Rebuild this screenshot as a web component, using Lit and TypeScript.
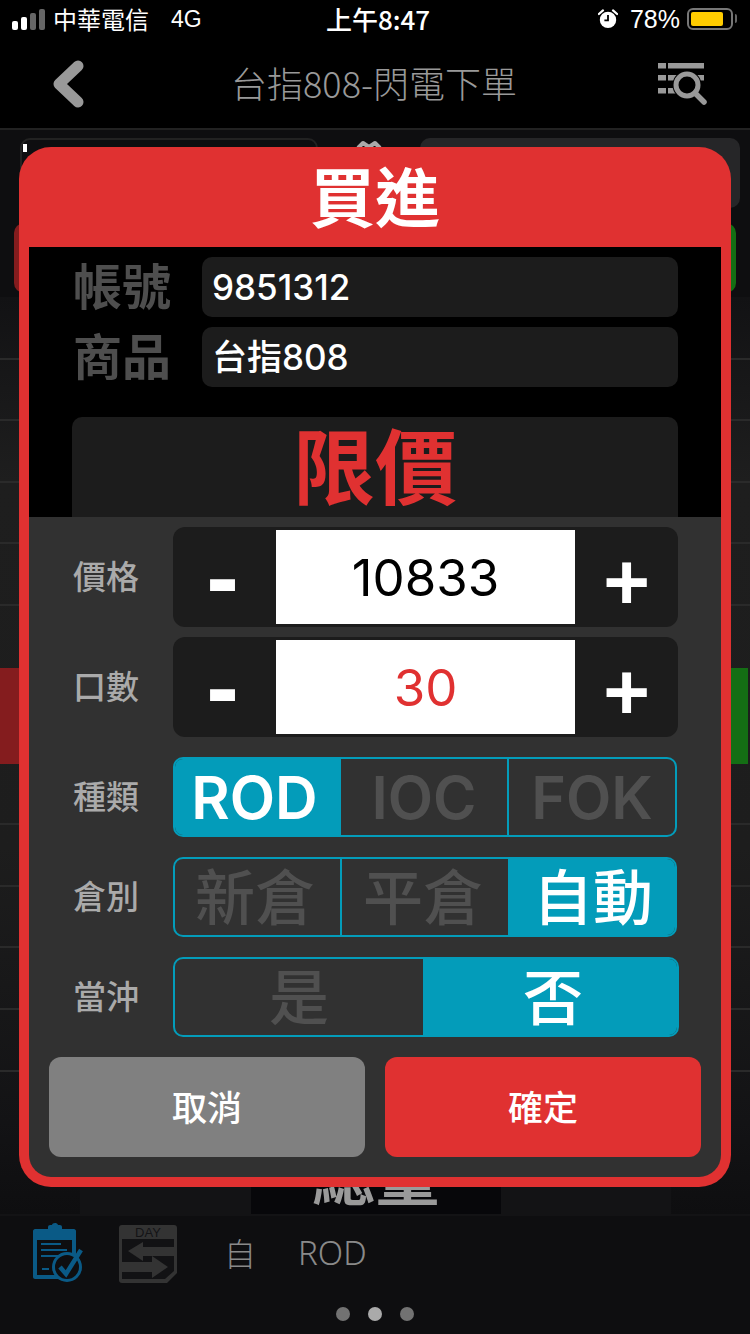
import { LitElement, html, css } from "lit";
import { customElement } from "lit/decorators.js";

const CJK = css(['"Noto Sans CJK TC", "Noto Sans CJK SC", sans-serif'] as any);

@customElement("app-root")
export class AppRoot extends LitElement {
  static styles = css`
    :host { display: block; position: relative; width: 750px; height: 1334px; overflow: hidden; background: #0e0e10; font-family: Inter, "Noto Sans CJK TC", sans-serif; color: #fff; }
    .status { height: 40px; background: #000; display: grid; grid-template-columns: 1fr auto 1fr; align-items: center; padding: 0 17px 2px 12px; box-sizing: border-box; font-size: 24px; }
    .st-left { display: flex; align-items: center; }
    .signal { display: flex; align-items: flex-end; gap: 3px; height: 21px; width: 41px; }
    .signal i { display: block; width: 6px; border-radius: 2px; background: #666; }
    .signal i.on { background: #fff; }
    .s1 { height: 9px; } .s2 { height: 13px; } .s3 { height: 17px; } .s4 { height: 21px; }
    .carrier { font-family: ${CJK}; margin-right: 22px; font-size: 24px; line-height: 1; }
    .net { font-size: 23px; font-family: "Liberation Sans", sans-serif; }
    .time { font-size: 26px; font-weight: 500; font-family: ${CJK}; line-height: 1; margin-left: 11px; }
    .st-right { display: flex; align-items: center; justify-content: flex-end; }
    .alarm { width: 20px; height: 20px; margin-right: 12px; }
    .pct { font-size: 25px; font-family: "Liberation Sans", sans-serif; margin-right: 7px; }
    .batt { width: 46px; height: 22px; box-sizing: border-box; border: 2px solid #777; border-radius: 6px; padding: 2px; position: relative; }
    .batt b { display: block; width: 32px; height: 14px; background: #ffcc00; border-radius: 2px; }
    .batt::after { content: ""; position: absolute; left: 46px; top: 4px; width: 2px; height: 9px; background: #666; border-radius: 0 2px 2px 0; }

    .nav { height: 88px; background: #000; border-bottom: 2px solid #222; display: flex; align-items: center; justify-content: space-between; padding: 0 42px 0 52px; }
    .back { width: 32px; height: 48px; display: block; }
    .title { font-family: ${CJK}; font-size: 36px; font-weight: 300; color: #999; line-height: 1; padding-bottom: 4px; margin-left: 6px; }
    .tools { width: 50px; height: 44px; display: block; margin-top: 2px; }

    .controls { display: flex; padding: 8px 10px 0 20px; height: 93px; box-sizing: border-box; }
    .ctl-l { width: 298px; height: 70px; box-sizing: border-box; border: 2px solid #222; border-radius: 10px; background: #0e0e10; padding: 4px 0 0 1px; }
    .cursor { display: block; width: 4px; height: 8px; background: #fff; }
    .ctl-m { width: 102px; display: flex; justify-content: center; padding-top: 2px; }
    .ctl-m svg { width: 26px; height: 10px; }
    .ctl-r { width: 320px; height: 70px; border-radius: 10px; background: #262628; }

    .actions { display: flex; justify-content: space-between; padding: 0 14px; height: 74px; }
    .act { width: 300px; height: 70px; border-radius: 10px; }
    .act.r { background: #841c1e; }
    .act.g { background: #146e14; }

    .rows { height: 917px; box-sizing: border-box; padding-top: 1px; background: linear-gradient(#121214, #1e1e1e 20%, #1d1d1d 60%, #131315 90%, #0e0e10); }
    .row { height: 61.6px; box-sizing: border-box; border-bottom: 2px solid #2a2a2a; }
    .row.none { border-bottom: 0; }
    .row.hi { height: 96px; display: flex; justify-content: space-between; border: 0; padding-right: 2px; }
    .hi .rr { width: 40px; background: #841c1e; }
    .hi .gg { width: 40px; background: #146e14; }
    .qty { position: absolute; left: 80px; top: 1130px; width: 591px; height: 84px; background: #131315; display: flex; justify-content: center; }
    .qty span { width: 250px; height: 84px; background: #07070a; color: #9a9a9a; font-family: ${CJK}; font-weight: 700; font-size: 64px; line-height: 84px; text-align: center; display: block; }

    .foot { position: absolute; left: 0; top: 1214px; width: 750px; height: 120px; border-top: 2px solid #131315; box-sizing: border-box; background: #0e0e10; }
    .bar { display: flex; align-items: center; height: 72px; padding: 4px 0 2px 33px; box-sizing: border-box; }
    .ic1 { width: 50px; height: 60px; display: block; }
    .ic2 { width: 58px; height: 60px; display: block; margin-left: 36px; }
    .bar .b1 { margin-left: 47px; font-family: ${CJK}; font-weight: 300; font-size: 32px; color: #8a8a8a; line-height: 1; padding-bottom: 2px; }
    .bar .b2 { margin-left: 42px; font-family: "Noto Sans", sans-serif; font-weight: 300; font-size: 33px; color: #8a8a8a; line-height: 1; padding-bottom: 2px; }
    .dots { display: flex; justify-content: center; gap: 18px; padding-top: 19px; }
    .dots i { width: 14px; height: 14px; border-radius: 50%; background: #727272; display: block; }
    .dots i.on { background: #aaa; }

    .modal { position: absolute; left: 19px; top: 147px; width: 712px; height: 1040px; background: #e03131; border-radius: 32px; box-sizing: border-box; padding: 0 10px 10px; display: flex; flex-direction: column; }
    .mhead { height: 100px; flex: none; display: flex; align-items: center; justify-content: center; font-family: ${CJK}; font-weight: 700; font-size: 65px; line-height: 1; color: #fff; padding-bottom: 6px; box-sizing: border-box; }
    .mbody { flex: 1; border-radius: 0 0 22px 22px; overflow: hidden; display: flex; flex-direction: column; }
    .info { height: 270px; flex: none; background: #000; box-sizing: border-box; padding: 10px 43px 0 43px; display: flex; flex-direction: column; gap: 10px; }
    .irow { display: grid; grid-template-columns: 130px 1fr; height: 60px; align-items: center; }
    .irow .lb { font-family: ${CJK}; font-size: 49px; font-weight: 700; color: #4e4e4e; line-height: 1; padding-left: 1px; padding-bottom: 7px; }
    .irow .fd { height: 60px; border-radius: 10px; background: #1c1c1c; display: flex; align-items: center; padding-left: 10px; font-size: 35px; font-weight: 500; line-height: 1; }
    .limit { margin-top: 20px; height: 100px; flex: none; background: #1c1c1c; border-radius: 10px 10px 0 0; text-align: center; font-family: ${CJK}; font-weight: 700; font-size: 82px; line-height: 92px; color: #e03131; }
    .ctrl { flex: 1; background: #313131; box-sizing: border-box; padding: 10px 20px 20px; display: flex; flex-direction: column; }
    .line { display: grid; grid-template-columns: 124px 1fr; align-items: center; margin-right: 23px; }
    .lab { font-family: ${CJK}; font-size: 33px; font-weight: 500; color: #aaa; padding-left: 24px; line-height: 1; padding-bottom: 4px; }
    .step { height: 100px; border-radius: 12px; background: #1c1c1c; display: grid; grid-template-columns: 103px 299px 103px; grid-template-rows: 94px; padding: 3px 0; box-sizing: border-box; align-items: stretch; }
    .step .sym { display: flex; align-items: center; justify-content: center; font-family: "Liberation Sans", sans-serif; font-weight: 700; color: #fff; line-height: 60px; min-height: 0; }
    .step .minus { font-size: 98px; padding-right: 4px; padding-bottom: 0; }
    .step .plus { font-size: 80px; padding-top: 10px; }
    .step .val { background: #fff; color: #000; font-family: Inter, sans-serif; font-size: 51px; display: flex; align-items: center; justify-content: center; line-height: 1; box-sizing: border-box; }
    .step .val.red { color: #e03131; }
    .gap10 { margin-top: 10px; }
    .gap20 { margin-top: 20px; }
    .seg { height: 80px; display: grid; grid-template-columns: 166px 166px 168px; border: 2px solid #039cba; border-radius: 10px; box-sizing: border-box; width: 504px; }
    .seg.tri { grid-template-columns: 165px 168px 167px; }
    .seg.wide { width: 506px; grid-template-columns: 248px 1fr; }
    .seg .o { display: flex; align-items: center; justify-content: center; color: #505050; font-weight: 600; font-size: 59px; line-height: 1; box-sizing: border-box; }
    .seg .o:first-child { border-radius: 8px 0 0 8px; }
    .seg .o:last-child { border-radius: 0 8px 8px 0; }
    .seg .o + .o { border-left: 2px solid #039cba; }
    .seg .o.on + .o { border-left: 0; }
    .seg .o.on { background: #039cba; color: #fff; }
    .seg.first-on .o.on { padding-right: 7px; }
    .seg.cjk .o { font-family: ${CJK}; font-size: 60px; font-weight: 500; padding-bottom: 6px; }
    .seg.tri .o:first-child { padding-right: 5px; }
    .seg.tri .o:nth-child(2) { padding-right: 4px; }
    .seg.tri .o.on { padding-left: 1px; }
    .seg.wide .o.on { padding-left: 4px; }
    .btns { display: flex; gap: 20px; margin-top: 20px; }
    .btn { flex: 1; height: 100px; border-radius: 12px; display: flex; align-items: center; justify-content: center; color: #fff; font-family: ${CJK}; font-weight: 500; font-size: 35px; line-height: 1; padding-bottom: 4px; box-sizing: border-box; }
    .btn.gray { background: #808080; }
    .btn.red { background: #e03131; }
  `;

  render() {
    return html`
      <div class="status">
        <div class="st-left">
          <div class="signal"><i class="s1 on"></i><i class="s2 on"></i><i class="s3"></i><i class="s4"></i></div>
          <span class="carrier">中華電信</span><span class="net">4G</span>
        </div>
        <div class="time">上午8:47</div>
        <div class="st-right">
          <svg class="alarm" viewBox="0 0 22 22">
            <circle cx="11" cy="12" r="9" fill="#fff"/>
            <path d="M11 6.5V12.5H7" fill="none" stroke="#000" stroke-width="2"/>
            <path d="M1 5.5L5.5 1.5M21 5.5L16.5 1.5" stroke="#fff" stroke-width="2.4" stroke-linecap="round"/>
          </svg>
          <span class="pct">78%</span>
          <div class="batt"><b></b></div>
        </div>
      </div>
      <div class="nav">
        <svg class="back" viewBox="0 0 32 48"><path d="M26 6L7 24L26 42" fill="none" stroke="#999" stroke-width="11" stroke-linecap="round" stroke-linejoin="round"/></svg>
        <div class="title">台指808-閃電下單</div>
        <svg class="tools" viewBox="0 0 50 44">
          <g fill="#999">
            <rect x="0" y="0" width="8" height="5.5"/><rect x="10" y="0" width="36" height="5.5"/>
            <rect x="0" y="12" width="8" height="5.5"/><rect x="10" y="12" width="36" height="5.5"/>
            <rect x="0" y="25" width="8" height="5.5"/><rect x="10" y="25" width="12" height="5.5"/>
          </g>
          <circle cx="29" cy="22" r="14.5" fill="#000"/>
          <circle cx="29" cy="22" r="11" fill="none" stroke="#999" stroke-width="5"/>
          <path d="M37 30L46 39" stroke="#999" stroke-width="5.5" stroke-linecap="round"/>
        </svg>
      </div>
      <div class="controls">
        <div class="ctl-l"><span class="cursor"></span></div>
        <div class="ctl-m"><svg viewBox="0 0 26 10"><path d="M2 8L7 3L13 7L19 3L24 8" fill="none" stroke="#aaa" stroke-width="4" stroke-linejoin="round"/></svg></div>
        <div class="ctl-r"></div>
      </div>
      <div class="actions"><div class="act r"></div><div class="act g"></div></div>
      <div class="rows">
        <div class="row"></div><div class="row"></div><div class="row"></div><div class="row"></div><div class="row"></div><div class="row none"></div>
        <div class="row hi"><div class="rr"></div><div class="gg"></div></div>
        <div class="row"></div><div class="row"></div><div class="row"></div><div class="row"></div><div class="row"></div>
      </div>
      <div class="qty"><span>總量</span></div>
      <div class="foot">
        <div class="bar">
          <svg class="ic1" viewBox="0 0 50 60">
            <path d="M2 6H15V4C15 2 17 2 19 2C19 0 24 -1 25 2C27 2 29 2 29 4V6H41C42 6 43 7 43 8V36L39 40V17H4V52H26L29 56H2C1 56 0 55 0 54V8C0 7 1 6 2 6Z" fill="#0a5a86"/>
            <rect x="8" y="20" width="20" height="2" fill="#0a5a86"/>
            <rect x="8" y="26" width="26" height="2" fill="#0a5a86"/>
            <rect x="8" y="32" width="20" height="2" fill="#0a5a86"/>
            <rect x="9" y="45" width="7" height="2" fill="#0a5a86"/>
            <circle cx="34" cy="44" r="13.5" fill="#0e0e10" stroke="#0a5a86" stroke-width="3"/>
            <path d="M27 44L33 51L48 27" fill="none" stroke="#0a5a86" stroke-width="4.5"/>
          </svg>
          <svg class="ic2" viewBox="0 0 58 60">
            <path d="M3 2H55C57 2 58 3 58 5V50L48 60H3C1 60 0 59 0 57V5C0 3 1 2 3 2Z" fill="#333"/>
            <text x="29" y="14" text-anchor="middle" font-family="Liberation Sans, sans-serif" font-size="13" fill="#141416">DAY</text>
            <path d="M3 16H55V48L46 56H3Z" fill="#121214"/>
            <path d="M9 28L24 19V24H55V33H24V38Z" fill="#333"/>
            <path d="M49 44L33 33V39H3V49H33V55Z" fill="#333"/>
          </svg>
          <span class="b1">自</span><span class="b2">ROD</span>
        </div>
        <div class="dots"><i></i><i class="on"></i><i></i></div>
      </div>

      <div class="modal">
        <div class="mhead">買進</div>
        <div class="mbody">
          <div class="info">
            <div class="irow"><div class="lb">帳號</div><div class="fd">9851312</div></div>
            <div class="irow"><div class="lb">商品</div><div class="fd">台指808</div></div>
            <div class="limit">限價</div>
          </div>
          <div class="ctrl">
            <div class="line"><div class="lab">價格</div>
              <div class="step"><div class="sym minus">-</div><div class="val">10833</div><div class="sym plus">+</div></div></div>
            <div class="line gap10"><div class="lab">口數</div>
              <div class="step"><div class="sym minus">-</div><div class="val red">30</div><div class="sym plus">+</div></div></div>
            <div class="line gap20"><div class="lab">種類</div>
              <div class="seg first-on"><div class="o on">ROD</div><div class="o">IOC</div><div class="o">FOK</div></div></div>
            <div class="line gap20"><div class="lab">倉別</div>
              <div class="seg cjk tri"><div class="o">新倉</div><div class="o">平倉</div><div class="o on">自動</div></div></div>
            <div class="line gap20"><div class="lab">當沖</div>
              <div class="seg cjk wide"><div class="o">是</div><div class="o on">否</div></div></div>
            <div class="btns"><div class="btn gray">取消</div><div class="btn red">確定</div></div>
          </div>
        </div>
      </div>
    `;
  }
}
